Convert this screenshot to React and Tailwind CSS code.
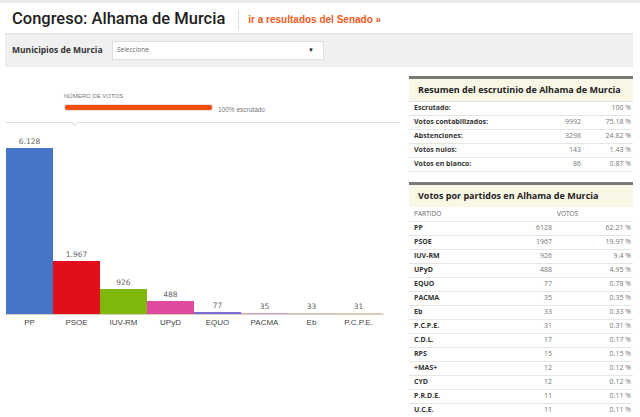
import React from "react";

const bars = [
  { n: "PP", v: 6128, t: "6.128", c: "#4674c6" },
  { n: "PSOE", v: 1967, t: "1.967", c: "#e20e1b" },
  { n: "IUV-RM", v: 926, t: "926", c: "#7fb70a" },
  { n: "UPyD", v: 488, t: "488", c: "#df4aa0" },
  { n: "EQUO", v: 77, t: "77", c: "#7c6bd2" },
  { n: "PACMA", v: 35, t: "35", c: "#d9a6c8" },
  { n: "Eb", v: 33, t: "33", c: "#cfc6ae" },
  { n: "P.C.P.E.", v: 31, t: "31", c: "#d6cdb2" },
];

const resumen = [
  ["Escrutado:", "", "100 %"],
  ["Votos contabilizados:", "9992", "75.18 %"],
  ["Abstenciones:", "3298", "24.82 %"],
  ["Votos nulos:", "143", "1.43 %"],
  ["Votos en blanco:", "86", "0.87 %"],
];

const partidos = [
  ["PP", "6128", "62.21 %"],
  ["PSOE", "1967", "19.97 %"],
  ["IUV-RM", "926", "9.4 %"],
  ["UPyD", "488", "4.95 %"],
  ["EQUO", "77", "0.78 %"],
  ["PACMA", "35", "0.35 %"],
  ["Eb", "33", "0.33 %"],
  ["P.C.P.E.", "31", "0.31 %"],
  ["C.D.L.", "17", "0.17 %"],
  ["RPS", "15", "0.15 %"],
  ["+MAS+", "12", "0.12 %"],
  ["CYD", "12", "0.12 %"],
  ["P.R.D.E.", "11", "0.11 %"],
  ["U.C.E.", "11", "0.11 %"],
];

export default function App() {
  return (
    <div className="w-[640px] h-[417px] overflow-hidden bg-white font-['Open_Sans',sans-serif]">
      <div className="h-[3px] bg-[#ebebeb]" />
      <div className="h-[30px] flex items-center pl-[12px] pt-[3px]">
        <span className="font-['Roboto',sans-serif] font-medium text-[16.5px] leading-none text-[#1e1e1e] whitespace-nowrap">
          Congreso: Alhama de Murcia
        </span>
        <span className="ml-[13px] w-px h-[20px] bg-[#dcdcdc]" />
        <span className="ml-[9px] font-['Liberation_Sans',sans-serif] font-bold text-[10px] text-[#f15a24] whitespace-nowrap">
          ir a resultados del Senado »
        </span>
      </div>
      <div className="ml-[5px] mr-[7px] h-[34px] bg-[#f0f0f0] flex items-center pl-[7px] shadow-[inset_0_1px_2px_rgba(0,0,0,0.06)]">
        <span className="font-bold text-[8.5px] text-[#333] whitespace-nowrap w-[100px]">Municipios de Murcia</span>
        <div className="w-[212px] h-[19px] bg-white border border-[#dedede] flex items-center justify-between pl-[4px] pr-[9px]">
          <span className="text-[6.5px] text-[#666]">Seleccione</span>
          <span className="text-[6px] text-[#222]">▼</span>
        </div>
      </div>
      <div className="flex">
        <div className="w-[403px] pl-[6px]">
          <div className="pl-[58px] pt-[26px]">
            <div className="font-['Liberation_Sans',sans-serif] text-[6px] leading-[7px] text-[#777]">NÚMERO DE VOTOS</div>
            <div className="flex items-center mt-[1px]">
              <div className="w-[149px] h-[7px] rounded-[2px] bg-[#e6e6e6] p-px">
                <div className="w-full h-full rounded-[2px] bg-[#f24e0c]" />
              </div>
              <span className="ml-[5px] mt-[4px] font-['Liberation_Sans',sans-serif] text-[6.5px] text-[#777]">100% escrutado</span>
            </div>
          </div>
          <div className="relative mt-[7px] w-[394px] border-t border-[#dcdcdc]">
            <div className="absolute left-[66px] top-[-3px] w-[5px] h-[5px] rotate-45 bg-white border-r border-b border-[#dcdcdc]" />
          </div>
          <div className="w-[378px] h-[192px] flex items-end border-b border-[#d8d0bc]">
            {bars.map((b) => (
              <div key={b.n} className="w-[47px] flex flex-col items-center justify-end">
                <span className="font-['DejaVu_Sans',sans-serif] text-[7.5px] leading-[9px] mb-[2px] text-[#666]">{b.t}</span>
                <div className="w-full" style={{ height: Math.max(1, Math.round((b.v * 166) / 6128)), backgroundColor: b.c }} />
              </div>
            ))}
          </div>
          <div className="w-[378px] flex">
            {bars.map((b) => (
              <div key={b.n} className="w-[47px] text-center font-['Liberation_Sans',sans-serif] text-[8px] leading-[16px] text-[#444]">
                {b.n}
              </div>
            ))}
          </div>
        </div>
        <div className="w-[224px] ml-[6px] pt-[9px] text-[7px]">
          <div className="border-t-[3px] border-[#7a7a7a]">
            <div className="h-[23px] bg-[#faf7e6] flex items-center pl-[9px] border-b border-[#e2e2e2]">
              <span className="font-bold text-[9px] text-[#222] whitespace-nowrap">Resumen del escrutinio de Alhama de Murcia</span>
            </div>
            {resumen.map((r) => (
              <div key={r[0]} className="h-[14px] flex items-center border-b border-[#e6e6e6]">
                <span className="flex-1 pl-[5px] font-bold text-[#333] whitespace-nowrap">{r[0]}</span>
                <span className="text-right text-[#777]">{r[1]}</span>
                <span className="w-[52px] pr-[2px] text-right text-[#777]">{r[2]}</span>
              </div>
            ))}
          </div>
          <div className="mt-[10px] border-t-[3px] border-[#7a7a7a]">
            <div className="h-[22px] bg-[#faf7e6] flex items-center pl-[9px]">
              <span className="font-bold text-[9px] text-[#222] whitespace-nowrap">Votos por partidos en Alhama de Murcia</span>
            </div>
            <div className="h-[15px] flex items-center border-b border-[#e6e6e6] text-[6.5px] text-[#666]">
              <span className="flex-1 pl-[5px]">PARTIDO</span>
              <span className="w-[76px]">VOTOS</span>
            </div>
            {partidos.map((r) => (
              <div key={r[0]} className="h-[14px] flex items-center border-b border-[#e6e6e6]">
                <span className="flex-1 pl-[5px] font-bold text-[#333] whitespace-nowrap">{r[0]}</span>
                <span className="text-right text-[#777]">{r[1]}</span>
                <span className="w-[81px] pr-[2px] text-right text-[#777]">{r[2]}</span>
              </div>
            ))}
          </div>
        </div>
      </div>
    </div>
  );
}
